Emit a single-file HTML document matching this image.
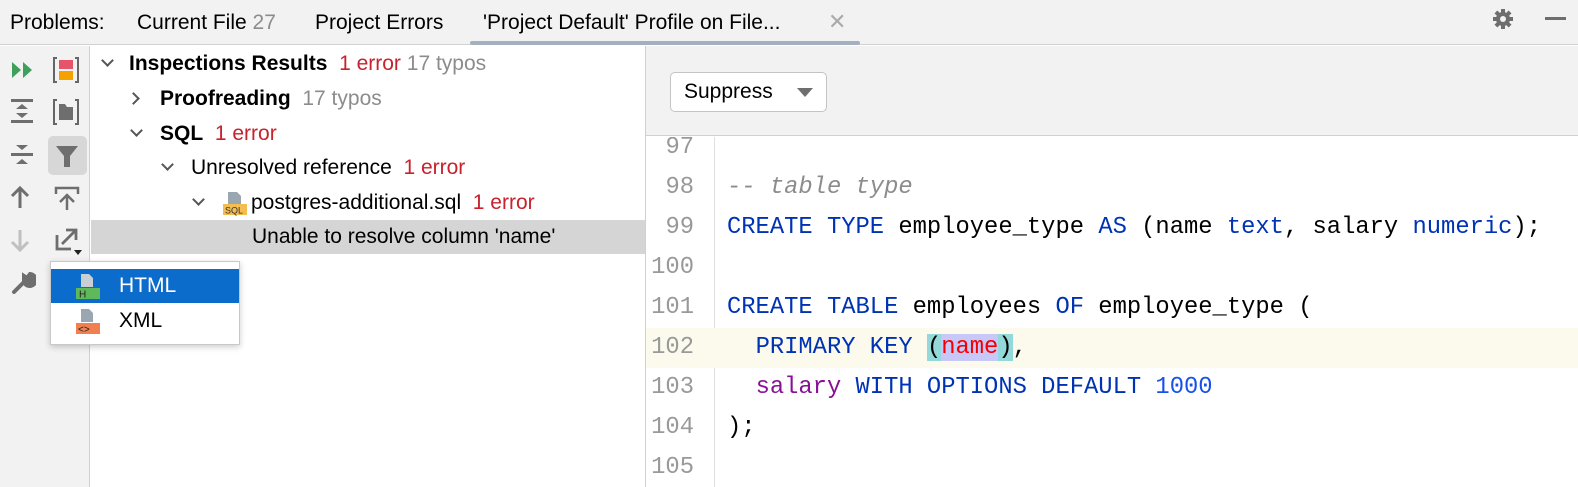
<!DOCTYPE html>
<html><head><meta charset="utf-8"><style>
*{margin:0;padding:0;box-sizing:border-box}
body{width:1578px;height:487px;overflow:hidden;background:#fff;font-family:"Liberation Sans",sans-serif;position:relative;color:#000}
.abs{position:absolute}
#hdr{left:0;top:0;width:1578px;height:45px;background:#f2f2f2;border-bottom:1px solid #d1d1d1;font-size:21px}
#hdr span{position:absolute;top:11px;white-space:nowrap}
#left{left:0;top:46px;width:90px;height:441px;background:#f2f2f2;border-right:1px solid #d1d1d1}
#tree{left:91px;top:46px;width:555px;height:441px;background:#fff;border-right:1px solid #d1d1d1;font-size:21px}
.row{position:absolute;left:0;width:554px;height:34px;line-height:34px;white-space:nowrap}
.row .t{position:absolute}
.err{color:#c7222d}.gr{color:#8c8c8c}
.chev{position:absolute;width:9px;height:9px;border-right:2px solid #555;border-bottom:2px solid #555}
#top{left:646px;top:46px;width:932px;height:90px;background:#f2f2f2;border-bottom:1px solid #d1d1d1}
#btn{left:670px;top:72px;width:157px;height:40px;background:#fff;border:1px solid #c4c4c4;border-radius:5px;font-size:21px;line-height:38px;padding-left:13px}
#code{left:646px;top:137px;width:932px;height:350px;overflow:hidden;font-family:"Liberation Mono",monospace;font-size:23.8px}
.ln{position:absolute;left:0;width:932px;height:40px;line-height:40px;white-space:pre}
.ln .n{position:absolute;right:884px;color:#999;text-align:right}
.ln .c{position:absolute;left:81px}
.k{color:#0033b3}.p{color:#871094}.cm{color:#8c8c8c;font-style:italic}.num{color:#1750eb}
#popup{left:50px;top:261px;width:190px;height:84px;background:#fff;border:1px solid #c9c9c9;box-shadow:0 2px 6px rgba(0,0,0,.2);font-size:21px}
</style></head><body>
<div id="hdr" class="abs">
<span style="left:10px">Problems:</span>
<span style="left:137px">Current File <span class="gr" style="position:static">27</span></span>
<span style="left:315px">Project Errors</span>
<span style="left:483px">'Project Default' Profile on File...</span>
<span style="left:828px;color:#aaa;font-size:22px;top:9px">✕</span>
<div class="abs" style="left:470px;top:41px;width:390px;height:4px;background:#a4afbf;border-radius:2px"></div>
<svg class="abs" style="left:1492px;top:8px" width="22" height="22" viewBox="0 0 22 22"><g fill="#6e6e6e"><circle cx="11" cy="11" r="7"/><rect x="9" y="1" width="4" height="20"/><rect x="1" y="9" width="20" height="4"/><rect x="9" y="1" width="4" height="20" transform="rotate(45 11 11)"/><rect x="9" y="1" width="4" height="20" transform="rotate(-45 11 11)"/></g><circle cx="11" cy="11" r="3" fill="#f2f2f2"/></svg>
<div class="abs" style="left:1545px;top:17px;width:21px;height:3px;background:#6e6e6e"></div>
</div>
<div id="left" class="abs">
<svg class="abs" style="left:10px;top:14px" width="26" height="20"><path d="M2 2 L11 10 L2 18Z M13 2 L22 10 L13 18Z" fill="#3da05b"/></svg>
<svg class="abs" style="left:52px;top:10px" width="28" height="28"><path d="M5 2H2V26H5 M23 2H26V26H23" stroke="#666" stroke-width="2" fill="none"/><rect x="7" y="4" width="14" height="9" fill="#e55468"/><rect x="7" y="15" width="14" height="9" fill="#f4a200"/></svg>
<svg class="abs" style="left:10px;top:52px" width="24" height="26"><g fill="#6e6e6e"><rect x="1" y="1" width="22" height="3"/><rect x="1" y="22" width="22" height="3"/><path d="M6 11L12 6L18 11Z M6 15L12 20L18 15Z"/></g></svg>
<svg class="abs" style="left:52px;top:52px" width="28" height="28"><path d="M5 2H2V26H5 M23 2H26V26H23" stroke="#666" stroke-width="2" fill="none"/><path d="M7 6H13L15 9H21V22H7Z" fill="#6e6e6e"/></svg>
<svg class="abs" style="left:10px;top:96px" width="24" height="26"><g fill="#6e6e6e"><rect x="1" y="11" width="22" height="3"/><path d="M6 3L12 8L18 3Z M6 22L12 17L18 22Z"/></g></svg>
<div class="abs" style="left:48px;top:90px;width:39px;height:39px;background:#d7d7d7;border-radius:5px"></div>
<svg class="abs" style="left:55px;top:98px" width="24" height="24"><path d="M1 2H23L15 12V23H9V12Z" fill="#6e6e6e"/></svg>
<svg class="abs" style="left:10px;top:140px" width="20" height="24"><path d="M10 2V22 M2 10L10 2L18 10" stroke="#6e6e6e" stroke-width="3" fill="none"/></svg>
<svg class="abs" style="left:54px;top:140px" width="26" height="26"><path d="M2 8V2H24V8 M13 24V10 M6 16L13 9L20 16" stroke="#6e6e6e" stroke-width="2.5" fill="none"/></svg>
<svg class="abs" style="left:10px;top:182px" width="20" height="24"><path d="M10 2V22 M2 14L10 22L18 14" stroke="#c0c0c0" stroke-width="3" fill="none"/></svg>
<svg class="abs" style="left:54px;top:181px" width="30" height="30"><path d="M3 8V22H17 M8 17L21 4 M12 3H22V13" stroke="#6e6e6e" stroke-width="2.8" fill="none"/><path d="M20 23H28L24 28Z" fill="#222"/></svg>
<svg class="abs" style="left:10px;top:224px" width="26" height="26"><path d="M4 22L14 12 M14 12A6 6 0 1 0 20 4L17 8L14 6Z" stroke="#6e6e6e" stroke-width="4" fill="#6e6e6e" stroke-linecap="round"/></svg>
</div>
<div id="tree" class="abs">
<div class="row" style="top:1px"><div class="chev" style="left:12px;top:9px;transform:rotate(45deg)"></div><span class="t" style="left:38px"><b>Inspections Results</b>&nbsp; <span class="err">1 error</span> <span class="gr">17 typos</span></span></div>
<div class="row" style="top:36px"><div class="chev" style="left:38px;top:12px;transform:rotate(-45deg)"></div><span class="t" style="left:69px"><b>Proofreading</b>&nbsp; <span class="gr">17 typos</span></span></div>
<div class="row" style="top:71px"><div class="chev" style="left:41px;top:9px;transform:rotate(45deg)"></div><span class="t" style="left:69px"><b>SQL</b>&nbsp; <span class="err">1 error</span></span></div>
<div class="row" style="top:105px"><div class="chev" style="left:72px;top:9px;transform:rotate(45deg)"></div><span class="t" style="left:100px">Unresolved reference&nbsp; <span class="err">1 error</span></span></div>
<div class="row" style="top:140px"><div class="chev" style="left:103px;top:9px;transform:rotate(45deg)"></div>
<svg class="abs" style="left:131px;top:4px" width="26" height="26"><path d="M6 2H15L19 6V14H6Z" fill="#9aa7b0"/><rect x="1" y="14" width="24" height="11" fill="#f4bd4f"/><text x="3" y="23.5" font-size="9" font-family="Liberation Sans" fill="#333">SQL</text></svg>
<span class="t" style="left:160px">postgres-additional.sql&nbsp; <span class="err">1 error</span></span></div>
<div class="row" style="top:174px;background:#d5d5d5"><span class="t" style="left:161px">Unable to resolve column 'name'</span></div>
</div>
<div id="top" class="abs"></div>
<div id="btn" class="abs">Suppress<svg class="abs" style="left:126px;top:15px" width="16" height="10"><path d="M0 0H16L8 9Z" fill="#6e6e6e"/></svg></div>
<div id="code" class="abs">
<div class="abs" style="left:68px;top:0;width:1px;height:350px;background:#e0e0e0"></div>
<div class="ln" style="top:-9px"><span class="n">97</span></div>
<div class="ln" style="top:31px"><span class="n">98</span><span class="c cm">-- table type</span></div>
<div class="ln" style="top:71px"><span class="n">99</span><span class="c"><span class="k">CREATE TYPE</span> employee_type <span class="k">AS</span> (name <span class="k">text</span>, salary <span class="k">numeric</span>);</span></div>
<div class="ln" style="top:111px"><span class="n">100</span></div>
<div class="ln" style="top:151px"><span class="n">101</span><span class="c"><span class="k">CREATE TABLE</span> employees <span class="k">OF</span> employee_type (</span></div>
<div class="ln" style="top:191px;background:#fcfaed"><span class="n">102</span><span class="c">  <span class="k">PRIMARY KEY</span> <span style="background:#93d9d9">(</span><span style="background:#c8c8f8;color:#f50000">name</span><span style="background:#93d9d9">)</span>,</span></div>
<div class="ln" style="top:231px"><span class="n">103</span><span class="c">  <span class="p">salary</span> <span class="k">WITH OPTIONS DEFAULT</span> <span class="num">1000</span></span></div>
<div class="ln" style="top:271px"><span class="n">104</span><span class="c">);</span></div>
<div class="ln" style="top:311px"><span class="n">105</span></div>
</div>
<div id="popup" class="abs">
<div class="abs" style="left:0;top:7px;width:188px;height:34px;background:#0b6ccb"></div>
<svg class="abs" style="left:22px;top:10px" width="28" height="28"><path d="M8 2H16L20 6V15H8Z" fill="#c8d0d6"/><rect x="3" y="16" width="24" height="11" fill="#5fb85a"/><text x="6" y="25.5" font-size="10" font-family="Liberation Sans" fill="#222">H</text></svg>
<span class="abs" style="left:68px;top:12px;color:#fff">HTML</span>
<svg class="abs" style="left:22px;top:45px" width="28" height="28"><path d="M8 2H16L20 6V15H8Z" fill="#9aa7b0"/><rect x="3" y="16" width="24" height="11" fill="#f08050"/><text x="5" y="25.5" font-size="10" font-family="Liberation Sans" fill="#222">&lt;&gt;</text></svg>
<span class="abs" style="left:68px;top:47px">XML</span>
</div>
</body></html>
